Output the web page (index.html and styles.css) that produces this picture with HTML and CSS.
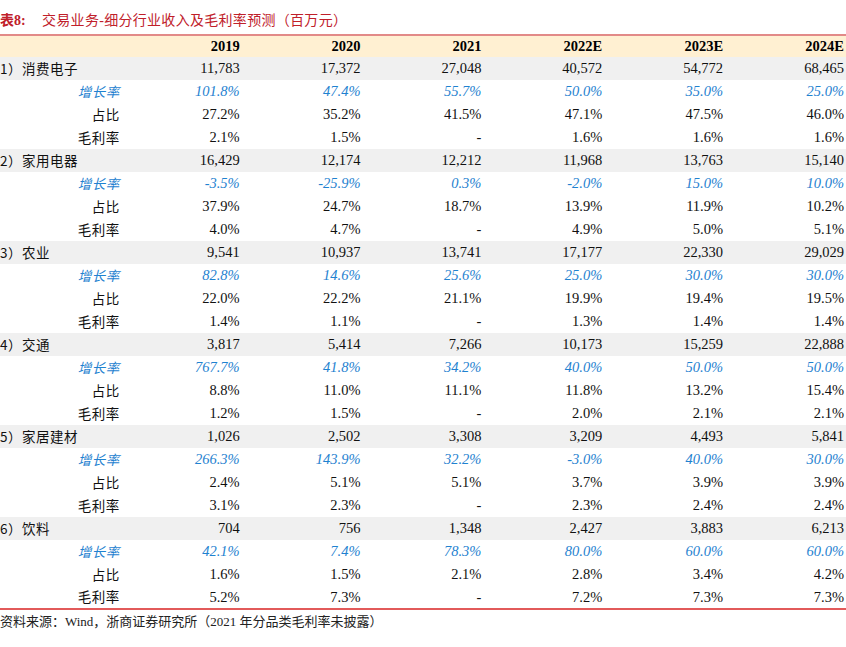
FILE: index.html
```html
<!DOCTYPE html>
<html lang="zh">
<head>
<meta charset="utf-8">
<link rel="stylesheet" href="styles.css">
</head>
<body>
<div class="page">
  <div class="title"><span class="tno">表8:</span><span class="ttext">交易业务-细分行业收入及毛利率预测（百万元）</span></div>
  <table class="data">
    <thead>
      <tr><th class="lab"></th><th>2019</th><th>2020</th><th>2021</th><th>2022E</th><th>2023E</th><th>2024E</th></tr>
    </thead>
    <tbody>
      <tr class="main"><td class="lab">1）消费电子</td><td>11,783</td><td>17,372</td><td>27,048</td><td>40,572</td><td>54,772</td><td>68,465</td></tr>
      <tr class="growth"><td class="lab">增长率</td><td>101.8%</td><td>47.4%</td><td>55.7%</td><td>50.0%</td><td>35.0%</td><td>25.0%</td></tr>
      <tr><td class="lab">占比</td><td>27.2%</td><td>35.2%</td><td>41.5%</td><td>47.1%</td><td>47.5%</td><td>46.0%</td></tr>
      <tr><td class="lab">毛利率</td><td>2.1%</td><td>1.5%</td><td>-</td><td>1.6%</td><td>1.6%</td><td>1.6%</td></tr>

      <tr class="main"><td class="lab">2）家用电器</td><td>16,429</td><td>12,174</td><td>12,212</td><td>11,968</td><td>13,763</td><td>15,140</td></tr>
      <tr class="growth"><td class="lab">增长率</td><td>-3.5%</td><td>-25.9%</td><td>0.3%</td><td>-2.0%</td><td>15.0%</td><td>10.0%</td></tr>
      <tr><td class="lab">占比</td><td>37.9%</td><td>24.7%</td><td>18.7%</td><td>13.9%</td><td>11.9%</td><td>10.2%</td></tr>
      <tr><td class="lab">毛利率</td><td>4.0%</td><td>4.7%</td><td>-</td><td>4.9%</td><td>5.0%</td><td>5.1%</td></tr>

      <tr class="main"><td class="lab">3）农业</td><td>9,541</td><td>10,937</td><td>13,741</td><td>17,177</td><td>22,330</td><td>29,029</td></tr>
      <tr class="growth"><td class="lab">增长率</td><td>82.8%</td><td>14.6%</td><td>25.6%</td><td>25.0%</td><td>30.0%</td><td>30.0%</td></tr>
      <tr><td class="lab">占比</td><td>22.0%</td><td>22.2%</td><td>21.1%</td><td>19.9%</td><td>19.4%</td><td>19.5%</td></tr>
      <tr><td class="lab">毛利率</td><td>1.4%</td><td>1.1%</td><td>-</td><td>1.3%</td><td>1.4%</td><td>1.4%</td></tr>

      <tr class="main"><td class="lab">4）交通</td><td>3,817</td><td>5,414</td><td>7,266</td><td>10,173</td><td>15,259</td><td>22,888</td></tr>
      <tr class="growth"><td class="lab">增长率</td><td>767.7%</td><td>41.8%</td><td>34.2%</td><td>40.0%</td><td>50.0%</td><td>50.0%</td></tr>
      <tr><td class="lab">占比</td><td>8.8%</td><td>11.0%</td><td>11.1%</td><td>11.8%</td><td>13.2%</td><td>15.4%</td></tr>
      <tr><td class="lab">毛利率</td><td>1.2%</td><td>1.5%</td><td>-</td><td>2.0%</td><td>2.1%</td><td>2.1%</td></tr>

      <tr class="main"><td class="lab">5）家居建材</td><td>1,026</td><td>2,502</td><td>3,308</td><td>3,209</td><td>4,493</td><td>5,841</td></tr>
      <tr class="growth"><td class="lab">增长率</td><td>266.3%</td><td>143.9%</td><td>32.2%</td><td>-3.0%</td><td>40.0%</td><td>30.0%</td></tr>
      <tr><td class="lab">占比</td><td>2.4%</td><td>5.1%</td><td>5.1%</td><td>3.7%</td><td>3.9%</td><td>3.9%</td></tr>
      <tr><td class="lab">毛利率</td><td>3.1%</td><td>2.3%</td><td>-</td><td>2.3%</td><td>2.4%</td><td>2.4%</td></tr>

      <tr class="main"><td class="lab">6）饮料</td><td>704</td><td>756</td><td>1,348</td><td>2,427</td><td>3,883</td><td>6,213</td></tr>
      <tr class="growth"><td class="lab">增长率</td><td>42.1%</td><td>7.4%</td><td>78.3%</td><td>80.0%</td><td>60.0%</td><td>60.0%</td></tr>
      <tr><td class="lab">占比</td><td>1.6%</td><td>1.5%</td><td>2.1%</td><td>2.8%</td><td>3.4%</td><td>4.2%</td></tr>
      <tr><td class="lab">毛利率</td><td>5.2%</td><td>7.3%</td><td>-</td><td>7.2%</td><td>7.3%</td><td>7.3%</td></tr>
    </tbody>
  </table>
  <div class="source">资料来源：Wind，浙商证券研究所（2021 年分品类毛利率未披露）</div>
</div>
</body>
</html>
```

FILE: styles.css
```css
html, body {
  margin: 0;
  padding: 0;
  background: #ffffff;
}

.page {
  width: 846px;
  font-family: "Liberation Serif", "Noto Sans CJK SC", serif;
  color: #111111;
}

.title {
  height: 36px;
  display: flex;
  align-items: center;
  padding-top: 3px;
  box-sizing: border-box;
  color: #c0202a;
  font-size: 14px;
  font-family: "Liberation Serif", "Noto Sans CJK SC", serif;
  border-bottom: 2px solid #e28a88;
}

.tno {
  width: 42px;
  font-weight: bold;
}

.ttext {
  letter-spacing: 0.3px;
}

.data {
  width: 846px;
  border-collapse: collapse;
  table-layout: fixed;
  font-size: 14.5px;
}

.data th,
.data td {
  text-align: right;
  padding: 0 2px 0 0;
  white-space: nowrap;
  line-height: 1;
}

.data thead tr {
  height: 21px;
  background: #fff0d2;
}

.data th {
  font-weight: bold;
  color: #000000;
}

.data tbody tr {
  height: 23px;
}

.data tbody tr.main {
  background: #f0f0f0;
}

.data td.lab {
  font-family: "Noto Sans CJK SC", sans-serif;
  font-size: 13.5px;
  padding-right: 1px;
  letter-spacing: 0.5px;
}

.data tr.main td.lab {
  text-align: left;
  padding-left: 0;
}

.data tr.growth td {
  color: #1f82d0;
  font-style: italic;
}

.data tbody tr:last-child td {
  border-bottom: 2px solid #e25a5a;
}

.source {
  padding-top: 1px;
  font-size: 13px;
  color: #222222;
  font-family: "Liberation Serif", "Noto Sans CJK SC", serif;
}
```
